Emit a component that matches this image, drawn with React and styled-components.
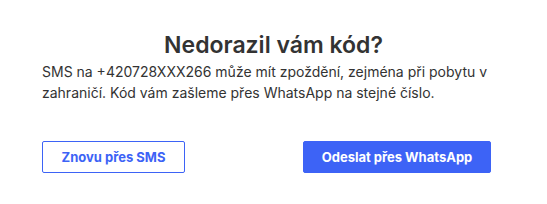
import React from 'react'
import styled, { createGlobalStyle } from 'styled-components'

const GlobalStyle = createGlobalStyle`
  html, body {
    margin: 0;
    padding: 0;
    background: #ffffff;
  }
  body {
    font-family: Inter, "Noto Sans", sans-serif;
    -webkit-font-smoothing: antialiased;
  }
`

const Dialog = styled.section`
  width: 547px;
  height: 204px;
  box-sizing: border-box;
  padding: 30px 42px 0 42px;
  display: flex;
  flex-direction: column;
`

const Title = styled.h2`
  margin: 0;
  text-align: center;
  font-size: 23px;
  line-height: 30px;
  font-weight: 600;
  color: #333333;
`

const Text = styled.p`
  margin: 1px 0 0 0;
  font-size: 14px;
  line-height: 21px;
  color: #333333;
`

const Actions = styled.div`
  display: flex;
  justify-content: space-between;
  margin-top: 38px;
  padding-right: 14px;
`

const Button = styled.button`
  height: 32px;
  width: ${p => p.$width}px;
  box-sizing: border-box;
  border-radius: 2px;
  border: 1px solid #3d63f6;
  background: ${p => (p.$primary ? '#3d63f6' : '#ffffff')};
  color: ${p => (p.$primary ? '#ffffff' : '#3d63f6')};
  font-family: Inter, "Noto Sans", sans-serif;
  font-size: 13px;
  font-weight: 700;
  cursor: pointer;
`

export default function App() {
  return (
    <>
      <GlobalStyle />
      <Dialog>
        <Title>Nedorazil vám kód?</Title>
        <Text>
          SMS na +420728XXX266 může mít zpoždění, zejména při pobytu v zahraničí. Kód vám zašleme přes WhatsApp na stejné číslo.
        </Text>
        <Actions>
          <Button $width={143}>Znovu přes SMS</Button>
          <Button $width={188} $primary>Odeslat přes WhatsApp</Button>
        </Actions>
      </Dialog>
    </>
  )
}
